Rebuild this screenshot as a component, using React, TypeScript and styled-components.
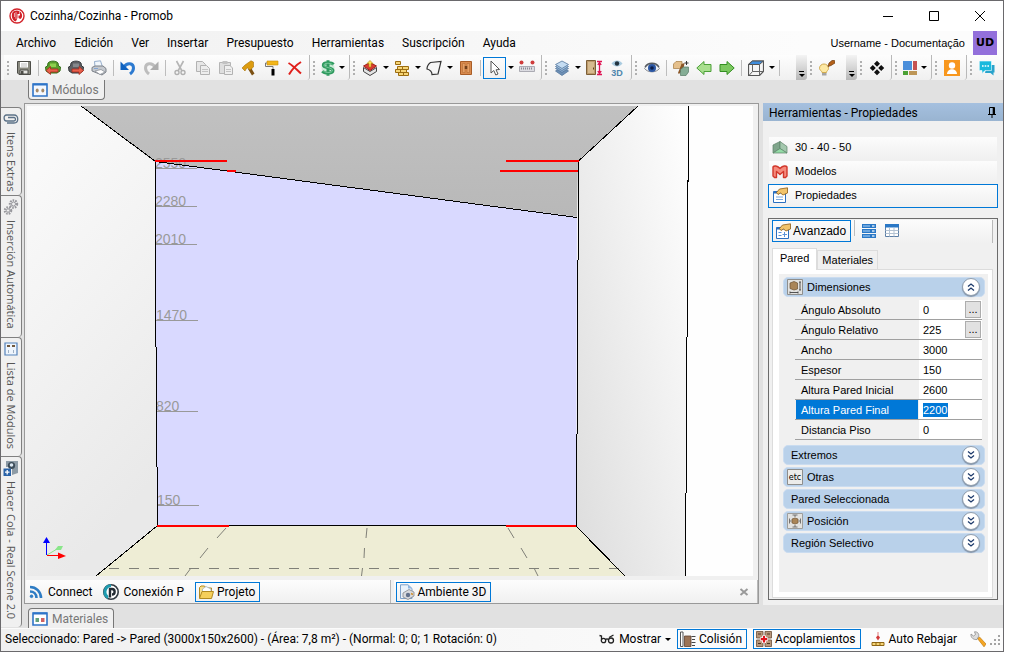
import React from 'react';
import styled, { createGlobalStyle, css } from 'styled-components';

const GlobalStyle = createGlobalStyle`
  * { box-sizing: border-box; }
  body { margin: 0; background: #fff; color: #000; font: 12px/16px Roboto, "Noto Sans", sans-serif; }
  button, input { font: inherit; color: inherit; margin: 0; padding: 0; border: 0; background: none; border-radius: 0; }
  svg { display: block; flex: none; }
  h2, p { margin: 0; font: inherit; }
`;

/* ---------- icons ---------- */

const art: Record<string, React.ReactNode> = {
  logo: (
    <>
      <circle cx="8" cy="8" r="7" fill="#fff" stroke="#d2232a" strokeWidth="1.4" />
      <path d="M3.500 4.500C5 2.600 8 2 10.500 3.200V6H8.500V9.500C8.300 11 7.500 12.500 6.500 13.600C3.500 12.500 1.800 8 3.500 4.500Z" fill="#d2232a" />
      <path d="M11 3.500C13.800 5.500 13.800 10 11.200 11L9.500 10V7.500H11Z" fill="#d2232a" />
      <path d="M5.500 5V9M7 4V11" stroke="#fff" strokeWidth=".6" />
    </>
  ),
  save: (
    <>
      <path d="M1.500 1.500H14.500V14.500H3L1.500 13Z" fill="#8a8a80" stroke="#4d4d48" />
      <path d="M4 2H12V7.500H4Z" fill="#fff" />
      <path d="M5 4H11M5 6H11" stroke="#bbb" />
      <path d="M4 10H12V14H4Z" fill="#e4e4e0" stroke="#4d4d48" />
      <path d="M5 11H7.500V14H5Z" fill="#4d4d48" />
    </>
  ),
  sofaGreen: (
    <>
      <path d="M3 3C5 .5 11 .5 13 3L13.500 6L15.500 7L15 11L12 13H4L1 11L.5 7L2.500 6Z" fill="#5a9e2d" stroke="#35701a" />
      <path d="M5 3.500H11V7H5Z" fill="#8ed04e" />
      <path d="M1 10.500L5.500 6.500V9H13V12H5.500V14.500Z" fill="#e8604c" stroke="#a92a1c" strokeWidth=".8" />
    </>
  ),
  sofaGray: (
    <>
      <path d="M3 3C5 .5 11 .5 13 3L13.500 6L15.500 7L15 11L12 13H4L1 11L.5 7L2.500 6Z" fill="#5c5f63" stroke="#36393c" />
      <path d="M5 3.500H11V7H5Z" fill="#85888c" />
      <path d="M15.500 10.500L11 6.500V9H4V12H11V14.500Z" fill="#e8604c" stroke="#a92a1c" strokeWidth=".8" />
    </>
  ),
  print: (
    <>
      <path d="M4 7L3.500 1.500L9.500 .8L11.500 7Z" fill="#f2f7fc" stroke="#7f9cc0" strokeWidth=".8" />
      <path d="M1 7.500L4 6H12L15 8.500V12L11 15L1 11Z" fill="#c4c8ce" stroke="#7b8088" />
      <path d="M4 11L10 9.500L14 12L9 14.500Z" fill="#fff" stroke="#8b9098" strokeWidth=".8" />
      <path d="M3 8.500H7" stroke="#84a5d2" />
    </>
  ),
  undo: (
    <>
      <path d="M4 7C7 2 13.500 3 13.500 8C13.500 10.500 12 12.500 10 14" fill="none" stroke="#2d7ad0" strokeWidth="3" />
      <path d="M.5 1.500V10H9Z" fill="#0f62c0" />
    </>
  ),
  redo: (
    <>
      <path d="M12 7C9 2 2.500 3 2.500 8C2.500 10.500 4 12.500 6 14" fill="none" stroke="#bdbdbd" strokeWidth="3" />
      <path d="M15.500 1.500V10H7Z" fill="#adadad" />
    </>
  ),
  cut: (
    <>
      <path d="M4.500 1L10 11M11.500 1L6 11" stroke="#b5b5b5" strokeWidth="1.600" />
      <circle cx="5" cy="12.500" r="2" fill="none" stroke="#b0b0b0" strokeWidth="1.400" />
      <circle cx="11" cy="12.500" r="2" fill="none" stroke="#b0b0b0" strokeWidth="1.400" />
    </>
  ),
  copy: (
    <>
      <path d="M1.500 1.500H7.500L10.500 4.500V11.500H1.500Z" fill="#e6e6e6" stroke="#b2b2b2" />
      <path d="M5.500 5.500H11.500L14.500 8.500V14.500H5.500Z" fill="#ededed" stroke="#b2b2b2" />
      <path d="M7 9.500H13M7 11.500H13" stroke="#c4c4c4" />
    </>
  ),
  paste: (
    <>
      <path d="M1.500 2.500H12.500V13.500H1.500Z" fill="#dedede" stroke="#b5b5b5" />
      <path d="M4.500 1H9.500V4H4.500Z" fill="#c2c2c2" />
      <path d="M6.500 5.500H12L14.500 8V14.500H6.500Z" fill="#efefef" stroke="#b2b2b2" />
      <path d="M8 9.500H13M8 11.500H13" stroke="#c4c4c4" />
    </>
  ),
  hammer: (
    <>
      <path d="M9.500 7L13.500 13.500L11 15.500L7 9Z" fill="#7c5113" />
      <path d="M1 8L4 5L10 .8L12.500 2V7L9 10L6.500 8L5 9L4 11Z" fill="#dc9c10" stroke="#a8720a" strokeWidth=".6" />
    </>
  ),
  roller: (
    <>
      <path d="M3 1H14V5H3Z" fill="#f2b619" stroke="#c98f06" strokeWidth=".6" />
      <path d="M3 3H1.500V6.500H9V10" fill="none" stroke="#777" />
      <path d="M7.500 9H10.500V15.500H7.500Z" fill="#000" />
    </>
  ),
  remove: <path d="M1.500 3C6 5.500 10 10 14 13.500M14 2C9 5 5 9.500 2 14.500" fill="none" stroke="#e0201c" strokeWidth="2" />,
  dollar: (
    <>
      <circle cx="8" cy="8" r="6.500" fill="#cdebd8" />
      <path d="M13.500 4.500C11.500 2 3.300 2 3.300 5.200C3.300 8.400 13 7 13 10.500C13 14 4.500 13.800 2.300 11.200M8 .3V15.700" fill="none" stroke="#2f9a5f" strokeWidth="3" />
      <path d="M12.500 4.500C10 2.800 4 2.800 4 5.200C4 7.600 12.500 7.400 12.500 10.500C12.500 13 6 13 3.500 11.200" fill="none" stroke="#8fd6ab" strokeWidth=".8" />
    </>
  ),
  boxUp: (
    <>
      <path d="M1.500 7.500L8 11.500L14.500 7.500V11.500L8 15.500L1.500 11.500Z" fill="#e4e4e4" stroke="#444" />
      <path d="M1.500 6L8 2.500L14.500 6L8 10.500Z" fill="#d93b32" stroke="#9d201a" />
      <path d="M8 .5L11 3.500H9V7H7V3.500H5Z" fill="#ffe35a" stroke="#a88209" strokeWidth=".6" />
    </>
  ),
  bricks: (
    <g fill="#f6d576" stroke="#9b6c10">
      <path d="M1.500 1.500H6.500V4.500H1.500ZM3.500 6.500H8.500V9.500H3.500ZM8.500 6.500H14.500V9.500H8.500ZM1.500 9.500H6.500V12.500H1.500ZM6.500 9.500H12.500V12.500H6.500ZM4.500 12.500H9.500V15.500H4.500ZM9.500 12.500H14.500V15.500H9.500Z" />
    </g>
  ),
  shape: <path d="M4.500 2.500L15 1.500L12 14L6 14.500C6 12 4.500 10 1 9C1 6 2.500 4 4.500 2.500Z" fill="#f6f6f6" stroke="#333" strokeWidth="1.200" />,
  cabinet: (
    <>
      <path d="M2.500 1.500H13.500V14.500H2.500Z" fill="#d98a4d" stroke="#a85d27" />
      <path d="M4.500 3.500H7V12.500H4.500ZM9 3.500H11.500V12.500H9Z" fill="#e6a066" stroke="#b66e35" strokeWidth=".6" />
      <path d="M7.300 6V9M8.700 6V9" stroke="#5c3011" />
    </>
  ),
  cursor: <path d="M4 1V13L6.800 10.500L8.800 15L11 14L9 9.800L12.500 9.500Z" fill="#fff" stroke="#555" />,
  measure: (
    <>
      <circle cx="2.500" cy="2.500" r="2" fill="#cf3c3c" />
      <circle cx="13.500" cy="2.500" r="2" fill="#cf3c3c" />
      <path d="M.5 6.500H15.500V11.500H.5Z" fill="#dcdce2" stroke="#9a9aa4" strokeWidth=".8" />
      <path d="M2.500 7.500V9.500M4.500 7.500V9.500M6.500 7.500V9.500M8.500 7.500V9.500M10.500 7.500V9.500M12.500 7.500V9.500" stroke="#777782" strokeWidth=".8" />
    </>
  ),
  layers: (
    <g stroke="#56779d" strokeWidth=".8">
      <path d="M1.500 11L8 7.500L14.500 11L8 15.500Z" fill="#6d8fb5" />
      <path d="M1.500 8.500L8 5L14.500 8.500L8 12.500Z" fill="#87a9cc" />
      <path d="M1.500 6.500L8 3L14.500 6.500L8 10.500Z" fill="#a3c2e0" />
      <path d="M1.500 4.500L8 1L14.500 4.500L8 8.500Z" fill="#c4dcf2" />
    </g>
  ),
  doorSize: (
    <>
      <path d="M.5 .5H9.500V14.500H.5Z" fill="#bd9a6a" stroke="#7c5f37" />
      <path d="M2 2H8V13H2Z" fill="#d6ba8e" />
      <path d="M7.500 7.500V9.500" stroke="#5b431f" />
      <path d="M11 1.500H16M11 14.500H16M13.500 2V14M11.800 5L13.500 2.500L15.200 5M11.800 11L13.500 13.500L15.200 11" fill="none" stroke="#df1453" strokeWidth="1.300" />
    </>
  ),
  view3d: (
    <>
      <path d="M2.500 3.500C5.500 -.5 10.500 -.5 13.500 3.500C10.500 7.500 5.500 7.500 2.500 3.500Z" fill="#a9cbe0" />
      <circle cx="8" cy="3.500" r="2.200" fill="#22333f" />
      <text x="8" y="15.500" textAnchor="middle" fontFamily="Liberation Sans" fontWeight="700" fontSize="9" fill="#4d87ad">3D</text>
    </>
  ),
  eye: (
    <>
      <path d="M.5 8.500C4 2.500 12 2.500 15.500 8.500C12 13 4 13 .5 8.500Z" fill="#eef1f4" stroke="#8a8d92" />
      <circle cx="8" cy="8" r="4" fill="#2b57a4" />
      <circle cx="8" cy="8" r="1.800" fill="#0c1f4a" />
      <path d="M1 7C4 2 12 2 15 7" fill="none" stroke="#555a60" strokeWidth="1.300" />
    </>
  ),
  objects: (
    <>
      <path d="M.5 4L3 1.500H9V6L6.500 8.500H.5Z" fill="#e5c08c" stroke="#a37b42" strokeWidth=".7" />
      <path d="M8.500 4L11.500 3L10.500 9L6 14L5 13Z" fill="#8a5627" />
      <path d="M7.500 9.500L10.500 7H15.500V12L13 15.500H7.500Z" fill="#85ad95" stroke="#557a64" strokeWidth=".7" />
      <path d="M13.500 1V5M11.500 3H15.500" stroke="#333" />
    </>
  ),
  arrowLeft: <path d="M.8 8L8 1.500V4.500H15V11.500H8V14.500Z" fill="#a9df8f" stroke="#4ca038" />,
  arrowRight: <path d="M15.200 8L8 1.500V4.500H1V11.500H8V14.500Z" fill="#7cc860" stroke="#348f22" />,
  cube: (
    <>
      <path d="M4.500 1H15.500V11.500L11.500 15.500H.5V4.500Z" fill="#f6f6f6" stroke="#555" strokeWidth="1.200" />
      <path d="M4.500 1H15.500L11.500 4.500H.5Z" fill="#3f8ede" stroke="#555" />
      <path d="M11.500 4.500V15.500M4.500 4.500V11.500H15.500M4.500 11.500L1 15.500" fill="none" stroke="#666" />
    </>
  ),
  bulb: (
    <>
      <path d="M.5 8.500C.5 2.500 9.500 2.500 9.500 8.500C9.500 10.500 7.500 10.500 7.500 12.500H3C3 10.500 .5 10.500 .5 8.500Z" fill="#fde9a4" stroke="#d1ab4f" />
      <path d="M3 13H7.500V15.500H3Z" fill="#a4a4a4" />
      <path d="M9 6.500L10 3L13 .5H15.500L16 3L12 5.500Z" fill="#b4611a" stroke="#6d390c" strokeWidth=".7" />
    </>
  ),
  diamonds: <path d="M8 .8L11 3.800L8 6.800L5 3.800ZM3.800 5L6.800 8L3.800 11L.8 8ZM12.200 5L15.200 8L12.200 11L9.200 8ZM8 9.200L11 12.200L8 15.200L5 12.200Z" fill="#111" />,
  layout: (
    <>
      <path d="M1 1H10V10H1Z" fill="#4b8fdb" />
      <path d="M11 1H15V10H11Z" fill="#c55252" />
      <path d="M1 11H6V15H1Z" fill="#4ba135" />
      <path d="M7 11H15V15H7Z" fill="#bd9657" />
    </>
  ),
  user: (
    <>
      <path d="M0 0H16V16H0Z" fill="#f8971d" />
      <circle cx="8" cy="5.500" r="3.200" fill="#fff" />
      <path d="M3 14C3 7.500 13 7.500 13 14Z" fill="#fff" />
    </>
  ),
  chat: (
    <>
      <path d="M8 5H15.500V12.500H14.500V15.500L11.500 13H6Z" fill="#29a3cc" />
      <path d="M.3 1H12.500V10.500H6L3 13.500V10.500H.3Z" fill="#19b9dd" stroke="#f4fbfd" strokeWidth=".6" />
      <path d="M3 6H4.600M5.700 6H7.300M8.400 6H10" stroke="#fff" strokeWidth="1.600" />
    </>
  ),
  modules: (
    <>
      <path d="M1 2H15V14H1Z" fill="#f4f8fe" stroke="#2f74c8" strokeWidth="1.600" />
      <path d="M1 2.500H15" stroke="#2f74c8" strokeWidth="2" />
      <ellipse cx="5.200" cy="8.500" rx="1.500" ry="2" fill="#a58a68" />
      <ellipse cx="10.800" cy="8.500" rx="1.500" ry="2" fill="#a58a68" />
    </>
  ),
  materials: (
    <>
      <path d="M1 2H15V14H1Z" fill="#fff" stroke="#2f74c8" strokeWidth="1.600" />
      <path d="M1 2.500H15" stroke="#2f74c8" strokeWidth="2" />
      <path d="M3.500 7H7V11H3.500Z" fill="#63a07c" />
      <path d="M9 7H12.500V11H9Z" fill="#cf6262" />
    </>
  ),
  clip: <path d="M4 12H11C16 12 16 4 11 4H3.500C.3 4 .3 10 3.500 10H11C13 10 13 6.500 11 6.500H5" fill="none" stroke="#5b7187" strokeWidth="1.300" />,
  gears: (
    <g fill="none" stroke="#98989d">
      <circle cx="10.500" cy="5" r="3.600" strokeWidth="2.200" strokeDasharray="1.600 1" />
      <circle cx="10.500" cy="5" r="2" />
      <circle cx="5" cy="11.500" r="3.200" strokeWidth="2.200" strokeDasharray="1.600 1" />
      <circle cx="5" cy="11.500" r="1.700" />
    </g>
  ),
  moduleList: (
    <>
      <path d="M2 2H14V14H2Z" fill="#eef5fd" stroke="#5583bb" strokeWidth="1.200" />
      <path d="M4 5H7M9 5H12" stroke="#70583c" strokeWidth="2" />
      <path d="M5.500 9V12M10.500 9V12" stroke="#9fb0c4" />
    </>
  ),
  queue: (
    <>
      <path d="M3 1H15V13L9 15V7H3Z" fill="#8d9ba6" />
      <circle cx="8.500" cy="5.500" r="3.600" fill="#3b4b58" />
      <circle cx="8.500" cy="5" r="1.800" fill="#dbe7f2" />
      <path d="M.5 8.500H8V16H.5Z" fill="#2a63a8" />
      <path d="M4.200 10V14.500M2 12.200H6.500" stroke="#fff" strokeWidth="1.300" />
    </>
  ),
  rss: (
    <g fill="none" stroke="#2e7cc4" strokeWidth="2.600">
      <path d="M2 7.500C5.500 7.500 8.500 10 8.500 14M2 3C8 3 13 7.500 13 14" />
      <circle cx="3.500" cy="12.300" r="1.300" fill="#2e7cc4" strokeWidth="1" />
    </g>
  ),
  connectP: (
    <>
      <circle cx="8" cy="8" r="7.200" fill="#fff" stroke="#323b43" strokeWidth="1.600" />
      <path d="M8 .3A7.700 7.700 0 0 0 5 15L5.500 12A5 5 0 0 1 8 3Z" fill="#1f9cb0" />
      <path d="M7 13.500V5H9C12.500 5 12.500 10.500 9 10.500" fill="none" stroke="#222b33" strokeWidth="2.400" />
    </>
  ),
  folder: (
    <>
      <path d="M1.500 14V3.500L3 2H6.500L8 4H13.500V7" fill="#f8e08e" stroke="#b18a21" />
      <path d="M4.500 5L8 2.500L13 5V8H4.500Z" fill="#fff" stroke="#9aa6b8" strokeWidth=".7" />
      <path d="M1.500 14.500L4 7.500H15.500L13.500 14.500Z" fill="#f5cf5b" stroke="#b18a21" />
    </>
  ),
  ambient: (
    <>
      <path d="M1.500 .8H9L13 4.500V14.500H1.500Z" fill="#eaf2fb" stroke="#7ea0c9" />
      <path d="M9 .8V4.500H13Z" fill="#8fb5df" />
      <path d="M4 9L10 5.500L15 8V12L9 15.500L4 13Z" fill="#d9dade" stroke="#85868c" strokeWidth=".8" />
      <circle cx="9" cy="11" r="2.200" fill="#63718c" />
      <path d="M12 9.500L14 10.500" stroke="#d1902e" strokeWidth="1.500" />
    </>
  ),
  pin: (
    <g fill="none" stroke="#000">
      <path d="M5.500 2.500H10.500V9.500M5.500 2.500V9.500M4 9.500H12M8 10V13" />
      <path d="M9.500 2.500V9.500" strokeWidth="1.600" />
    </g>
  ),
  roof: (
    <>
      <path d="M1 6L8 2.500V9.500L1 14Z" fill="#7fa58b" stroke="#5d8169" strokeWidth=".7" />
      <path d="M8 2.500L15 7.500V14L8 9.500Z" fill="#a4c8ae" stroke="#5d8169" strokeWidth=".7" />
      <path d="M1 14L8 9.500L15 14Z" fill="#94dba6" stroke="#5d8169" strokeWidth=".7" />
    </>
  ),
  m: <path d="M1 13V4C2 2.500 5 2.500 8 5.500C11 2.500 14 2.500 15 4V13L13.500 14.500H11.500V8.500L8 11.500L4.500 8.500V14.500H2.500Z" fill="#f58a7c" stroke="#d1372b" strokeWidth="1.400" strokeLinejoin="round" />,
  props: (
    <>
      <path d="M1.500 4.500H13.500V15.500H1.500Z" fill="#fff" stroke="#2b6fc0" />
      <path d="M1.500 5.500H10" stroke="#2b6fc0" strokeWidth="2" />
      <path d="M4 10H11M4 12.500H11" stroke="#7aa7dd" />
      <path d="M4.500 5.500L7.500 2L11 1.500L15.500 .8V6L11 8L8.500 6L6 7.500Z" fill="#f1c36b" stroke="#8c5a17" strokeWidth=".8" />
    </>
  ),
  propsPlus: (
    <>
      <path d="M1.500 4.500H13.500V15.500H1.500Z" fill="#fff" stroke="#2b6fc0" />
      <path d="M1.500 5.500H10" stroke="#2b6fc0" strokeWidth="2" />
      <path d="M3.500 9.500H6.500M3.500 12.500H6.500M9.500 9V14M7.500 11.500H12" stroke="#5b93d8" />
      <path d="M4.500 5.500L7.500 2L11 1.500L15.500 .8V6L11 8L8.500 6L6 7.500Z" fill="#f1c36b" stroke="#8c5a17" strokeWidth=".8" />
    </>
  ),
  list: (
    <g>
      {[1, 6, 11].map((y) => (
        <g key={y}>
          <path d={`M1 ${y}H15V${y + 4}H1Z`} fill="#2a78c6" />
          <path d={`M2 ${y + 2}H9`} stroke="#9cc5ee" strokeWidth="1.200" />
          <path d={`M11 ${y + 2}H13.500`} stroke="#fff" strokeWidth="1.200" />
        </g>
      ))}
    </g>
  ),
  grid: (
    <>
      <path d="M1.500 1.500H14.500V13.500H1.500Z" fill="#fff" stroke="#5c7fa6" />
      <path d="M1 1H15V4.500H1Z" fill="#2a78c6" />
      <path d="M5.500 4.500V13.500M10 4.500V13.500M1.500 7.500H14.500M1.500 10.500H14.500" stroke="#b4c3d3" />
    </>
  ),
  dims: (
    <>
      <path d="M.5 .5H15.500V15.500H.5Z" fill="#e2e2e0" stroke="#8e8e8c" />
      <path d="M3 4L7 2.500L10.500 4V10L7 11L3 9.500Z" fill="#a98558" stroke="#6b5030" strokeWidth=".7" />
      <path d="M13 3V11M12 3H14M12 11H14M3 13.500H11M3 12.500V14.500M11 12.500V14.500" stroke="#444" strokeWidth=".9" />
    </>
  ),
  etc: (
    <>
      <path d="M.5 .5H15.500V15.500H.5Z" fill="#ececea" stroke="#8e8e8c" />
      <text x="8" y="11" textAnchor="middle" fontFamily="DejaVu Sans" fontSize="8" fill="#000">etc</text>
    </>
  ),
  position: (
    <>
      <path d="M.5 .5H15.500V15.500H.5Z" fill="#e2e2e0" stroke="#9e9e9c" />
      <path d="M5 6L8 5L11 6V10L8 11L5 10Z" fill="#a98558" stroke="#765936" strokeWidth=".7" />
      <path d="M2.500 5.500V10.500M13.500 5.500V10.500M3 8H4.500M11.500 8H13M5.500 2H10.500M5.500 14H10.500M8 2V4M8 12V14" stroke="#666" strokeWidth=".9" />
    </>
  ),
  glasses: (
    <g fill="none" stroke="#222" strokeWidth="1.300">
      <path d="M.5 4.500L2.500 5V8M14.500 4L10 6.500" />
      <circle cx="4.500" cy="9.500" r="2.200" />
      <circle cx="12" cy="9.500" r="2.500" />
      <path d="M6.500 9C7.500 7.500 8.500 7.500 9.500 9" />
    </g>
  ),
  collision: (
    <>
      <path d="M.5 1H3V15.500H.5Z" fill="#fff" stroke="#555" />
      <path d="M4.500 5H11V15.500H4.500Z" fill="#9b7355" stroke="#5f4330" strokeWidth=".8" />
      <path d="M11.500 5.500H15.500M12 8.500H15M11.500 11.500H15.500M12 14.500H15" stroke="#444" />
    </>
  ),
  couplings: (
    <>
      <path d="M.5 .5H7V7H.5ZM9 .5H15.500V7H9ZM.5 9H7V15.500H.5ZM9 9H15.500V15.500H9Z" fill="#b8967a" stroke="#6b4f38" strokeWidth=".8" />
      <path d="M2 3H5M11 3H14M2 12.500H5M11 12.500H14" stroke="#4f3722" />
      <path d="M8 4.500V12M4.300 8.200H11.700" stroke="#fff" strokeWidth="4" />
      <path d="M8 5V11.500M4.800 8.200H11.200" stroke="#e0141c" strokeWidth="2.200" />
    </>
  ),
  lower: (
    <>
      <path d="M8 1V4" stroke="#e9a0a0" strokeWidth="1.400" />
      <path d="M8 4L10 6.500L8 9.500L6 6.500Z" fill="#d23a3a" />
      <path d="M2 11.500H14V14.500H2ZM6 11.500V14.500M10 11.500V14.500" fill="#f6d576" stroke="#8f6614" />
    </>
  ),
  wrench: (
    <>
      <path d="M7.500 7.500L9.500 6L16 13L14 15.800Z" fill="#f5a623" stroke="#c07a0c" strokeWidth=".7" />
      <path d="M1 3L3.500 5L5.500 3.500L4.500 .8C7.500 .5 9.500 3 8.500 5.500L7 8.500C4 9 .5 7 1 3Z" fill="#dcdcdc" stroke="#8c8c8c" strokeWidth=".8" />
    </>
  ),
  resize: <path d="M12 4H14V6H12ZM8 8H10V10H8ZM12 8H14V10H12ZM4 12H6V14H4ZM8 12H10V14H8ZM12 12H14V14H12Z" fill="#a4a4a4" />,
  minimize: <path d="M3 8.500H13" stroke="#000" />,
  maximize: <path d="M3.500 3.500H12.500V12.500H3.500Z" fill="none" stroke="#000" />,
  close: <path d="M3 3L13 13M13 3L3 13" stroke="#000" />,
  closeTab: <path d="M4 4.500L12 11.500M12 4.500L4 11.500" stroke="#999" strokeWidth="2.200" />,
  chevronsDown: <path d="M5 4.500L8 7L11 4.500M5 8.500L8 11L11 8.500" fill="none" stroke="#1d3a6b" strokeWidth="1.300" />,
  chevronsUp: <path d="M5 7.500L8 5L11 7.500M5 11.500L8 9L11 11.500" fill="none" stroke="#1d3a6b" strokeWidth="1.300" />,
};

const Icon = ({ name, size = 16 }: { name: string; size?: number }) => (
  <svg width={size} height={size} viewBox="0 0 16 16" aria-hidden="true">{art[name]}</svg>
);

/* ---------- window frame ---------- */

const Desktop = styled.div`
  display: flex;
  height: 100vh;
  min-height: 620px;
  padding: 0 17px 14px 0;
`;

const Window = styled.div`
  display: flex;
  flex: 1;
  flex-direction: column;
  min-width: 0;
  border: 1px solid #6a696c;
  background: #e1e1e1;
`;

const TitleBar = styled.header`
  display: flex;
  align-items: center;
  gap: 5px;
  height: 30px;
  padding-left: 8px;
  background: #fff;
`;

const WindowButtons = styled.div`
  display: flex;
  margin-left: auto;
`;

const WindowButton = styled.button`
  display: grid;
  place-items: center;
  width: 46px;
  height: 28px;
`;

const MenuBar = styled.nav`
  display: flex;
  align-items: center;
  height: 24px;
  padding-left: 6px;
  background: linear-gradient(90deg, #f0f0f0, #fcfcfc 80%);
`;

const MenuButton = styled.button`
  padding: 0 9px;
  white-space: nowrap;
`;

const Account = styled.div`
  display: flex;
  align-items: center;
  gap: 8px;
  margin-left: auto;
  padding-right: 6px;
  font: 11px/16px "Liberation Sans", sans-serif;
  white-space: nowrap;
`;

const Avatar = styled.span`
  width: 24px;
  height: 24px;
  background: #9370db;
  font: 700 11px/23px "DejaVu Sans", sans-serif;
  text-align: center;
`;

/* ---------- tool strips ---------- */

const ToolRow = styled.div`
  display: flex;
  height: 25px;
  padding-left: 3px;
  background: #f6f6f6;
`;

const Strip = styled.div<{ $grow?: boolean; $overflow?: boolean }>`
  display: flex;
  align-items: center;
  flex: ${(p) => (p.$grow ? '1' : 'none')};
  padding-right: ${(p) => (p.$overflow ? 0 : 3)}px;
  border-right: ${(p) => (p.$overflow || p.$grow ? '0' : '1px solid #b9b9b9')};
  border-radius: 0 0 3px 0;
  background: linear-gradient(#fdfdfd, #f0f0f0);
`;

const Grip = styled.span`
  width: 2px;
  height: 14px;
  margin: 0 3px;
  background: repeating-linear-gradient(#b0b0b0 0 2px, transparent 2px 4px);
`;

const ToolButton = styled.button<{ $tight?: boolean; $active?: boolean }>`
  display: grid;
  place-items: center;
  width: ${(p) => (p.$tight ? 19 : 23)}px;
  height: 22px;
  border: 1px solid ${(p) => (p.$active ? '#0078d7' : 'transparent')};
`;

const CaretButton = styled.button`
  display: grid;
  place-items: center;
  width: 9px;
  height: 22px;
`;

const Caret = styled.span`
  border: 3px solid transparent;
  border-top-color: #000;
  border-bottom-width: 0;
`;

const Divider = styled.span`
  width: 1px;
  height: 16px;
  margin: 0 2px 0 3px;
  background: #bdbdbd;
`;

const Overflow = styled.button<{ $gap: number }>`
  display: flex;
  flex-direction: column;
  align-items: center;
  justify-content: flex-end;
  gap: 2px;
  align-self: stretch;
  width: 11px;
  margin-left: ${(p) => p.$gap}px;
  padding-bottom: 3px;
  border-radius: 0 0 3px 0;
  background: linear-gradient(#f4f4f4, #b8b8b8);

  &::before {
    content: "";
    width: 5px;
    height: 1px;
    background: #000;
  }
`;

const DropArrow = () => (
  <CaretButton aria-label="Más opciones"><Caret /></CaretButton>
);

/* '|' is a divider, 'v' a drop-down arrow, anything else an icon name */
const strips: { tools: string[]; overflow?: number; tight?: boolean; grow?: boolean }[] = [
  { tools: ['save', '|', 'sofaGreen', 'sofaGray', 'print', '|', 'undo', 'redo', '|', 'cut', 'copy', 'paste', 'hammer', 'roller', 'remove'] },
  { tools: ['dollar', 'v'], tight: true },
  { tools: ['boxUp', 'v', 'bricks', 'v', 'shape', 'v', 'cabinet', '|', 'cursor', 'v', 'measure'] },
  { tools: ['layers', 'v', 'doorSize', 'view3d'] },
  { tools: ['eye', '|', 'objects', 'arrowLeft', 'arrowRight', '|', 'cube', 'v', '|'], overflow: 14 },
  { tools: ['bulb'], overflow: 8 },
  { tools: ['diamonds'] },
  { tools: ['layout', 'v'], tight: true },
  { tools: ['user'] },
  { tools: ['chat'], grow: true },
];

/* ---------- docking areas ---------- */

const Workspace = styled.div`
  display: flex;
  flex: 1;
  min-height: 0;
`;

const SideTabs = styled.div`
  display: flex;
  flex: none;
  flex-direction: column;
  width: 21px;
  margin: 27px 2px 1px 0;
`;

const SideTab = styled.button<{ $size: number }>`
  display: flex;
  flex: 1 1 ${(p) => p.$size}px;
  align-items: center;
  gap: 5px;
  padding: 3px 0;
  writing-mode: vertical-rl;
  border: 1px solid #808080;
  border-width: 1px 1px 0 0;
  border-radius: 0 4px 4px 0;
  background: #f0f0f0;
  color: #555;
  font: 11px/19px "Open Sans", "Noto Sans", sans-serif;
  white-space: nowrap;
`;

const Center = styled.main`
  display: flex;
  flex: 1;
  flex-direction: column;
  min-width: 0;
`;

const DockTab = styled.button<{ $below?: boolean }>`
  display: flex;
  flex: none;
  align-items: center;
  align-self: flex-start;
  gap: 4px;
  height: 20px;
  margin: ${(p) => (p.$below ? '4px 0 0 4px' : '0 0 3px 4px')};
  padding: 0 5px 0 3px;
  border: 1px solid #777;
  border-width: ${(p) => (p.$below ? '1px 1px 0' : '0 1px 1px')};
  border-radius: ${(p) => (p.$below ? '4px 4px 0 0' : '0 0 4px 4px')};
  background: #f0f0f0;
  color: #777;
`;

const ViewPanel = styled.section`
  display: flex;
  flex: 1;
  flex-direction: column;
  min-height: 0;
  border: 1px solid #999;
  background: #f0f0f0;
`;

const SceneBox = styled.div`
  flex: 1;
  min-height: 0;
  margin: 2px 5px 4px 2px;
  overflow: hidden;
  background: #fff;

  svg { width: 100%; height: 100%; }
`;

const ViewTabs = styled.div`
  display: grid;
  grid-template-columns: 1fr 1fr;
  gap: 3px;
  height: 23px;
  padding-left: 1px;
`;

const TabStrip = styled.div`
  display: flex;
  align-items: center;
  gap: 11px;
  padding: 0 6px 0 2px;
  border-right: 1px solid #b9b9b9;
  background: linear-gradient(#fdfdfd, #f0f0f0);
`;

const LabelButton = styled.button<{ $active?: boolean; $legacy?: boolean }>`
  display: flex;
  flex: none;
  align-items: center;
  gap: ${(p) => (p.$legacy ? 2 : 3)}px;
  height: ${(p) => (p.$legacy ? 22 : 20)}px;
  padding: 0 4px 0 2px;
  border: 1px solid ${(p) => (p.$active ? '#0078d7' : 'transparent')};
  white-space: nowrap;
  ${(p) => p.$legacy && css`font-family: "Liberation Sans", sans-serif;`}
`;

const CloseTab = styled.button`
  margin-left: auto;
`;

const PlainButton = styled.button`
  display: flex;
  align-items: center;
  gap: 4px;
  white-space: nowrap;
`;

/* ---------- properties panel ---------- */

const legacyFont = css`font: 11px/16px "Liberation Sans", sans-serif;`;

const Properties = styled.aside`
  display: flex;
  flex: none;
  flex-direction: column;
  width: 240px;
  margin: 23px 0 23px 4px;
  background: #f0f0f0;
`;

const PanelTitle = styled.div`
  display: flex;
  align-items: center;
  justify-content: space-between;
  height: 18px;
  padding: 1px 3px 0 6px;
  background: linear-gradient(#a5c0df, #99b4d1);
`;

const Pages = styled.div`
  display: flex;
  flex-direction: column;
  margin: 15px 5px 10px;
`;

const PageButton = styled.button<{ $active?: boolean }>`
  display: flex;
  align-items: center;
  gap: 7px;
  height: 24px;
  padding: 0 0 2px 3px;
  border: 1px solid ${(p) => (p.$active ? '#0078d7' : 'transparent')};
  background: linear-gradient(#fcfcfc, #f0f0f0) padding-box;
  ${legacyFont}
`;

const Sheet = styled.div`
  display: flex;
  flex: 1;
  flex-direction: column;
  margin: 0 5px 5px;
  padding: 1px 4px 1px 3px;
  border: 1px solid #6b6b6b;
`;

const SheetTools = styled.div`
  display: flex;
  align-items: flex-start;
  height: 23px;
  border-right: 1px solid #b9b9b9;
  background: linear-gradient(#fcfcfc, #f0f0f0);
`;

const SheetTabs = styled.div`
  display: flex;
  align-items: flex-end;
  height: 26px;
`;

const SheetTab = styled.button<{ $active?: boolean }>`
  position: relative;
  height: ${(p) => (p.$active ? 22 : 19)}px;
  margin-bottom: ${(p) => (p.$active ? -1 : 0)}px;
  padding: ${(p) => (p.$active ? '0 7px 3px' : '0 4px')};
  border: 1px solid #dcdcdc;
  border-bottom-width: 0;
  background: ${(p) => (p.$active ? '#fff' : '#f0f0f0')};
  ${legacyFont}
`;

const SheetPage = styled.div`
  display: flex;
  flex: 1;
  flex-direction: column;
  padding: 4px 4px 5px 6px;
  border: 1px solid #dcdcdc;
  background: #fff;
`;

const Groups = styled.div`
  display: flex;
  flex: 1;
  flex-direction: column;
  gap: 2px;
  padding: 3px 3px 0 4px;
  background: #f0f0f0;
  ${legacyFont}
`;

const GroupHeader = styled.button`
  display: flex;
  flex: none;
  align-items: center;
  gap: 4px;
  height: 20px;
  padding: 0 4px 0 3px;
  border: 1px solid #cadcf0;
  border-radius: 5px;
  background: #b9d1ea;
  text-align: left;
`;

const GroupName = styled.span<{ $plain?: boolean }>`
  flex: 1;
  padding-left: ${(p) => (p.$plain ? 4 : 0)}px;
`;

const Round = styled.span`
  display: grid;
  place-items: center;
  width: 18px;
  height: 18px;
  border: 1px solid #8f9dad;
  border-radius: 50%;
  background: #fff;
  box-shadow: 0 1px 1px #8293a8;
`;

const Fields = styled.div`
  margin: 1px 3px 3px 12px;
`;

const Field = styled.div<{ $active?: boolean }>`
  display: flex;
  height: 20px;
  border-bottom: 1px solid #a0a0a0;

  label {
    flex: none;
    width: 122px;
    margin: 0 1px;
    padding-left: 5px;
    line-height: 20px;
    background: ${(p) => (p.$active ? '#0078d7' : 'transparent')};
    color: ${(p) => (p.$active ? '#fff' : '#000')};
  }
`;

const ValueCell = styled.div`
  display: flex;
  flex: 1;
  align-items: center;
  min-width: 0;
  padding: 0 1px 0 4px;
  background: #fff;
`;

const ValueInput = styled.input<{ $selected?: boolean }>`
  flex: 0 1 ${(p) => (p.$selected ? '25px' : '100%')};
  min-width: 0;
  height: 14px;
  outline: none;
  ${(p) => p.$selected && css`background: #0078d7; color: #fff;`}
`;

const More = styled.button`
  flex: none;
  width: 16px;
  height: 17px;
  border: 1px solid #adadad;
  background: #e1e1e1;
  line-height: 15px;
`;

/* ---------- status bar ---------- */

const StatusBar = styled.footer`
  display: flex;
  align-items: center;
  gap: 6px;
  height: 23px;
  padding: 0 1px 2px 4px;
  border-top: 1px solid #fbfbfb;
  background: linear-gradient(90deg, #f0f0f0, #fcfcfc 80%);
  white-space: nowrap;
`;

const StatusText = styled.p`
  flex: 1;
  overflow: hidden;
`;

const StatusTail = styled.div`
  display: flex;
  align-items: flex-end;
  padding-left: 2px;
`;

/* ---------- scene drawing ---------- */

const heights: [string, number, number][] = [
  ['2550', 155, 168],
  ['2280', 155, 206],
  ['2010', 155, 244],
  ['1470', 156, 320],
  ['820', 156, 411],
  ['150', 157, 505],
];

const Scene = () => (
  <svg viewBox="27 106 726 470" preserveAspectRatio="xMidYMid slice" role="img" aria-label="Ambiente 3D">
    <defs>
      <linearGradient id="leftWall" x1="0" y1="0" x2=".3" y2="1"><stop offset="0" stopColor="#fcfcfc" /><stop offset="1" stopColor="#e9e9e9" /></linearGradient>
      <linearGradient id="rightWall" x1="1" y1="0" x2="0" y2=".9"><stop offset="0" stopColor="#ffffff" /><stop offset="1" stopColor="#dedede" /></linearGradient>
      <linearGradient id="ceiling" x1="0" y1="0" x2="0" y2="1"><stop offset="0" stopColor="#c1c1c1" /><stop offset="1" stopColor="#b8b8b8" /></linearGradient>
    </defs>
    <path d="M27 106H753V576H27Z" fill="#fefefe" />
    <path d="M27 106H81L155 161L157 526L96 576H27Z" fill="url(#leftWall)" />
    <path d="M638 106H688L685 576H625L576 526L578 161Z" fill="url(#rightWall)" />
    <path d="M81 106H638L578 161L577 217L155 162Z" fill="url(#ceiling)" />
    <path d="M155 162L577 217L576 526H157Z" fill="#d9d9ff" />
    <path d="M157 526H576L625 576H96Z" fill="#eeedd5" />
    <g fontFamily="Liberation Sans, sans-serif" fontSize="14" fill="#999" stroke="#999">
      {heights.map(([label, x, y]) => (
        <g key={label}>
          <text x={x} y={y} stroke="none">{label}</text>
          <path d={`M${x} ${y + 0.5}H${x + 42}`} />
        </g>
      ))}
    </g>
    <g stroke="#808078" fill="none">
      <path d="M109 568.500H619" strokeDasharray="10 10" />
      <path d="M226 528L217 538M208 548L200 558M191 568L185 576" />
      <path d="M367 528L366 538M364.500 548L364 558M362.500 568L361.500 576" />
      <path d="M508 528L514 538M521 548L527 558M534 568L538 576" />
    </g>
    <g stroke="#000" fill="none" shapeRendering="crispEdges">
      <path d="M81 106L155.500 161.500L577 217.500M638 106L578.500 161V175L576.500 526M155.500 161V286L157.500 526M157 525.500H576M157 526L96 576M576 526L625 576M688.500 106L685.500 576" />
    </g>
    <g stroke="#f00" strokeWidth="2">
      <path d="M155 161H227M506 161H579M500 171H578M227 171H236M157 526H229M506 526H576" />
    </g>
    <path d="M46.500 555V543" stroke="#00f" />
    <path d="M43 543L46.500 537L50 543Z" fill="#00f" />
    <path d="M47 555L57 549" stroke="#8ae68a" />
    <path d="M55 550L58 546L63 546L61 550Z" fill="#8ae68a" />
    <path d="M47 555.500H60" stroke="#f00" />
    <path d="M58 552.500L66 556L58 559Z" fill="#f00" />
  </svg>
);

/* ---------- page ---------- */

const menus = ['Archivo', 'Edición', 'Ver', 'Insertar', 'Presupuesto', 'Herramientas', 'Suscripción', 'Ayuda'];

const sideTabs: [string, string, number][] = [
  ['clip', 'Itens Extras', 88],
  ['gears', 'Inserción Automática', 142],
  ['moduleList', 'Lista de Módulos', 119],
  ['queue', 'Hacer Cola - Real Scene 2.0', 171],
];

const fields: { name: string; value: string; more?: boolean; active?: boolean }[] = [
  { name: 'Ángulo Absoluto', value: '0', more: true },
  { name: 'Ángulo Relativo', value: '225', more: true },
  { name: 'Ancho', value: '3000' },
  { name: 'Espesor', value: '150' },
  { name: 'Altura Pared Inicial', value: '2600' },
  { name: 'Altura Pared Final', value: '2200', active: true },
  { name: 'Distancia Piso', value: '0' },
];

const closedGroups: { name: string; icon?: string }[] = [
  { name: 'Extremos' },
  { name: 'Otras', icon: 'etc' },
  { name: 'Pared Seleccionada' },
  { name: 'Posición', icon: 'position' },
  { name: 'Región Selectivo' },
];

const Group = ({ name, icon, open }: { name: string; icon?: string; open?: boolean }) => (
  <GroupHeader aria-expanded={!!open}>
    {icon && <Icon name={icon} />}
    <GroupName $plain={!icon}>{name}</GroupName>
    <Round><Icon name={open ? 'chevronsUp' : 'chevronsDown'} /></Round>
  </GroupHeader>
);

export default function App() {
  return (
    <Desktop>
      <GlobalStyle />
      <Window>
        <TitleBar>
          <Icon name="logo" />
          <span>Cozinha/Cozinha - Promob</span>
          <WindowButtons>
            <WindowButton aria-label="Minimizar"><Icon name="minimize" /></WindowButton>
            <WindowButton aria-label="Maximizar"><Icon name="maximize" /></WindowButton>
            <WindowButton aria-label="Cerrar"><Icon name="close" /></WindowButton>
          </WindowButtons>
        </TitleBar>

        <MenuBar>
          {menus.map((m) => <MenuButton key={m}>{m}</MenuButton>)}
          <Account>Username - Documentação<Avatar>UD</Avatar></Account>
        </MenuBar>

        <ToolRow role="toolbar">
          {strips.map((s, i) => (
            <Strip key={i} $grow={s.grow} $overflow={s.overflow !== undefined}>
              <Grip />
              {s.tools.map((t, j) => {
                if (t === '|') return <Divider key={j} />;
                if (t === 'v') return <DropArrow key={j} />;
                return (
                  <ToolButton key={j} $tight={s.tight} $active={t === 'cursor'} aria-label={t}>
                    <Icon name={t} />
                  </ToolButton>
                );
              })}
              {s.overflow !== undefined && <Overflow $gap={s.overflow} aria-label="Más botones"><Caret /></Overflow>}
            </Strip>
          ))}
        </ToolRow>

        <Workspace>
          <SideTabs>
            {sideTabs.map(([icon, label, size]) => (
              <SideTab key={label} $size={size}><Icon name={icon} />{label}</SideTab>
            ))}
          </SideTabs>

          <Center>
            <DockTab><Icon name="modules" />Módulos</DockTab>
            <ViewPanel>
              <SceneBox><Scene /></SceneBox>
              <ViewTabs>
                <TabStrip>
                  <PlainButton><Icon name="rss" />Connect</PlainButton>
                  <PlainButton><Icon name="connectP" />Conexión P</PlainButton>
                  <LabelButton $active><Icon name="folder" />Projeto</LabelButton>
                </TabStrip>
                <TabStrip>
                  <LabelButton $active><Icon name="ambient" />Ambiente 3D</LabelButton>
                  <CloseTab aria-label="Cerrar ficha"><Icon name="closeTab" size={14} /></CloseTab>
                </TabStrip>
              </ViewTabs>
            </ViewPanel>
            <DockTab $below><Icon name="materials" />Materiales</DockTab>
          </Center>

          <Properties>
            <PanelTitle><h2>Herramientas - Propiedades</h2><Icon name="pin" /></PanelTitle>
            <Pages>
              <PageButton><Icon name="roof" />30 - 40 - 50</PageButton>
              <PageButton><Icon name="m" />Modelos</PageButton>
              <PageButton $active><Icon name="props" />Propiedades</PageButton>
            </Pages>
            <Sheet>
              <SheetTools>
                <LabelButton $active $legacy><Icon name="propsPlus" />Avanzado</LabelButton>
                <Divider />
                <ToolButton aria-label="Lista"><Icon name="list" /></ToolButton>
                <ToolButton aria-label="Tabla"><Icon name="grid" /></ToolButton>
              </SheetTools>
              <SheetTabs>
                <SheetTab $active>Pared</SheetTab>
                <SheetTab>Materiales</SheetTab>
              </SheetTabs>
              <SheetPage>
                <Groups>
                  <Group name="Dimensiones" icon="dims" open />
                  <Fields>
                    {fields.map((f, i) => (
                      <Field key={f.name} $active={f.active}>
                        <label htmlFor={`field-${i}`}>{f.name}</label>
                        <ValueCell>
                          <ValueInput id={`field-${i}`} defaultValue={f.value} $selected={f.active} />
                          {f.more && <More aria-label={`Editar ${f.name}`}>...</More>}
                        </ValueCell>
                      </Field>
                    ))}
                  </Fields>
                  {closedGroups.map((g) => <Group key={g.name} {...g} />)}
                </Groups>
              </SheetPage>
            </Sheet>
          </Properties>
        </Workspace>

        <StatusBar>
          <StatusText>Seleccionado: Pared -&gt; Pared (3000x150x2600) - (Área: 7,8 m²) - (Normal: 0; 0; 1 Rotación: 0)</StatusText>
          <PlainButton><Icon name="glasses" />Mostrar<Caret /></PlainButton>
          <LabelButton $active><Icon name="collision" />Colisión</LabelButton>
          <LabelButton $active><Icon name="couplings" />Acoplamientos</LabelButton>
          <LabelButton><Icon name="lower" />Auto Rebajar</LabelButton>
          <StatusTail>
            <PlainButton aria-label="Configurar"><Icon name="wrench" /></PlainButton>
            <Icon name="resize" />
          </StatusTail>
        </StatusBar>
      </Window>
    </Desktop>
  );
}
